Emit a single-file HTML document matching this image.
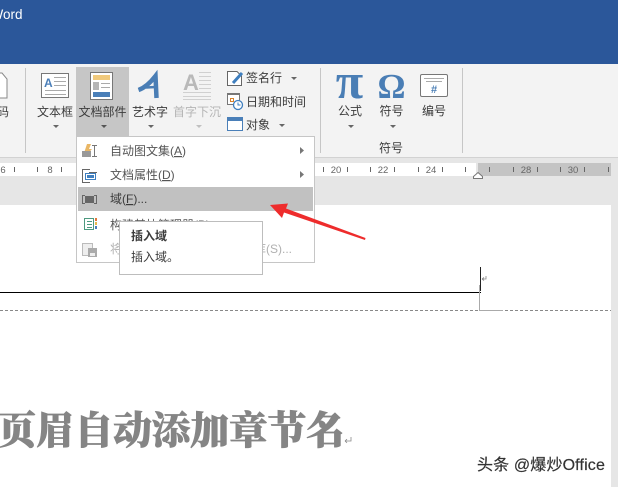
<!DOCTYPE html>
<html><head><meta charset="utf-8"><style>
html,body{margin:0;padding:0;background:#fff}
svg{display:block}
text{font-family:"Liberation Sans","Noto Sans CJK SC",sans-serif;font-size:12px;fill:#3c3c3c}
.c{text-anchor:middle}
.r{font-size:9.5px;fill:#666;text-anchor:middle}
</style></head><body>
<svg width="618" height="487" viewBox="0 0 618 487" xmlns="http://www.w3.org/2000/svg" style="overflow:hidden">
<rect width="618" height="487" fill="#e6e6e6"/>
<rect width="618" height="64" fill="#2b579a"/>
<text x="-9.500" y="19" style="font-size:13.500px;fill:#fff">Word</text>
<rect y="64" width="618" height="93" fill="#f3f3f3"/>
<rect y="157" width="618" height="1" fill="#d2d2d2"/>
<!-- separators -->
<rect x="25" y="68" width="1" height="85" fill="#c6c6c6"/>
<rect x="320" y="68" width="1" height="85" fill="#c6c6c6"/>
<rect x="462" y="68" width="1" height="85" fill="#c6c6c6"/>
<rect x="76" y="67" width="53" height="70" fill="#c6c6c6"/>
<!-- left remnant -->
<path d="M-2 73H2L7 79V98H-2Z" fill="#fff" stroke="#888"/>
<text x="-3" y="116">码</text>
<!-- text box -->
<rect x="41.500" y="73.500" width="27" height="24" fill="#fff" stroke="#777"/>
<text x="44" y="87" style="font-size:12px;font-weight:bold;fill:#4a7eb8">A</text>
<path d="M54 77.500H66M54 81.500H66M54 85.500H66M45 90.500H66M45 94.500H66" stroke="#aaa"/>
<text class="c" x="55" y="116">文本框</text>
<path d="M53 125h6l-3 3z" fill="#666"/>
<!-- doc parts -->
<rect x="90.500" y="72.500" width="22" height="27" fill="#fff" stroke="#777"/>
<rect x="93" y="75" width="17" height="5" fill="#f0c97c"/>
<rect x="93" y="82" width="6" height="8" fill="#b5b5b5"/>
<path d="M101 83.500H110M101 87.500H110" stroke="#aaa"/>
<rect x="93" y="92" width="17" height="5" fill="#4a7fb8"/>
<text class="c" x="102.500" y="116">文档部件</text>
<path d="M101 125h6l-3 3z" fill="#555"/>
<!-- wordart -->
<path d="M138.500 90Q147 87 155.500 76L156.500 98" fill="none" stroke="#4a7eb5" stroke-width="4.500"/>
<path d="M146 87.500L156 87" stroke="#4a7eb5" stroke-width="2.500"/>
<text class="c" x="150" y="116">艺术字</text>
<path d="M148 125h6l-3 3z" fill="#666"/>
<!-- drop cap -->
<text x="183" y="90" style="font-size:22px;font-weight:bold;fill:#b9b9b9">A</text>
<path d="M199 72.500H211M199 76.500H211M199 80.500H211M199 84.500H211M199 88.500H211M183 92.500H211M183 96.500H211M183 99.500H211" stroke="#d0d0d0"/>
<text class="c" x="197" y="116" style="fill:#b5b5b5">首字下沉</text>
<path d="M196 125h6l-3 3z" fill="#c0c0c0"/>
<!-- signature -->
<path d="M227.500 71.500H237L241.500 76V85.500H227.500Z" fill="#fff" stroke="#666"/>
<path d="M233 83L242 73" stroke="#3f7fbf" stroke-width="3"/>
<text x="246" y="82">签名行</text>
<path d="M291 77h6l-3 3z" fill="#666"/>
<!-- date -->
<rect x="227.500" y="93.500" width="12" height="11" fill="#fff" stroke="#777"/>
<rect x="227" y="93" width="13" height="2" fill="#777"/>
<rect x="230.500" y="98.500" width="3" height="3" fill="#fff" stroke="#d9822b"/>
<circle cx="238" cy="105" r="4.500" fill="#fff" stroke="#3f7fbf" stroke-width="1.300"/>
<path d="M238 102.500V105H240.500" fill="none" stroke="#3f7fbf"/>
<text x="246" y="106">日期和时间</text>
<!-- object -->
<rect x="227.500" y="117.500" width="15" height="13" fill="#fff" stroke="#4a7fb8"/>
<rect x="227" y="117" width="16" height="4" fill="#4a7fb8"/>
<text x="246" y="129">对象</text>
<path d="M279 124h6l-3 3z" fill="#666"/>
<!-- symbols -->
<text class="c" x="349.500" y="98" style="font-family:'Liberation Serif',serif;font-size:50px;font-weight:bold;fill:#4a7eb5">π</text>
<text class="c" x="391.500" y="98" style="font-family:'Liberation Serif',serif;font-size:35px;font-weight:bold;fill:#4a7eb5">Ω</text>
<rect x="420.500" y="74.500" width="27" height="22" rx="1.500" fill="#fff" stroke="#777"/>
<path d="M424 78.500H444M426 81.500H442" stroke="#aaa"/>
<text class="c" x="434" y="93" style="font-size:11px;font-weight:bold;fill:#4a7eb5">#</text>
<text class="c" x="350" y="115">公式</text>
<text class="c" x="391.500" y="115">符号</text>
<text class="c" x="434" y="115">编号</text>
<path d="M348 125h6l-3 3zM390 125h6l-3 3z" fill="#666"/>
<text class="c" x="391" y="152">符号</text>
<!-- ruler -->
<rect x="0" y="163" width="476" height="13" fill="#fff"/>
<rect x="478" y="163" width="133" height="13" fill="#c4c4c4"/>
<path d="M14.500 167v5M37.500 167v5M61.500 167v5M323.500 167v5M347.500 167v5M370.500 167v5M394.500 167v5M418.500 167v5M442.500 167v5M465.500 167v5M489.500 167v5M513.500 167v5M537.500 167v5M560.500 167v5M584.500 167v5M608.500 167v5" stroke="#666"/>
<text class="r" x="3" y="173">6</text><text class="r" x="50" y="173">8</text>
<text class="r" x="336" y="173">20</text><text class="r" x="383" y="173">22</text><text class="r" x="431" y="173">24</text>
<text class="r" x="526" y="173">28</text><text class="r" x="573" y="173">30</text>
<path d="M473.500 178.500V176.500L478 172.500L482.500 176.500V178.500Z" fill="#fff" stroke="#777"/>
<!-- page -->
<rect x="0" y="205" width="611" height="282" fill="#fff"/>
<path d="M0 292.500H481" stroke="#000"/>
<path d="M0 310.500H611" stroke="#888" stroke-dasharray="3 2"/>
<path d="M480.500 267V291" stroke="#222"/>
<path d="M479.500 285V310.500H503" fill="none" stroke="#aaa"/>
<path d="M486 276v3h-4M482 279l2-1.500M482 279l2 1.500" fill="none" stroke="#888" stroke-width=".8"/>
<text x="-2.500" y="444" style="font-family:'Liberation Serif','Noto Serif CJK SC',serif;font-size:38.600px;font-weight:900;fill:#858585;stroke:#858585;stroke-width:.7">页眉自动添加章节名</text>
<path d="M351 437v4h-6M345 441l2-1.800M345 441l2 1.800" fill="none" stroke="#888" stroke-width=".8"/>
<!-- menu -->
<rect x="76.500" y="136.500" width="238" height="126" fill="#fff" stroke="#c6c6c6"/>
<rect x="78" y="187" width="235" height="24" fill="#c1c1c1"/>
<path d="M83 156L87 144H91L89 149H92L85 157Z" fill="#eab765"/>
<rect x="82" y="151" width="9" height="6" fill="#999"/>
<path d="M92 145.500H97M94.500 145.500V156.500M92 156.500H97" fill="none" stroke="#777"/>
<path d="M90 169.500H82.500V182.500H90M89 172.500H97" fill="none" stroke="#666"/>
<rect x="85.500" y="173.500" width="10" height="6" fill="#fff" stroke="#3f7fbf"/>
<rect x="87" y="175" width="7" height="3" fill="#3f7fbf"/>
<path d="M85 195.500H82.500V203.500H85M94 195.500H96.500V203.500H94" fill="none" stroke="#666"/>
<rect x="85" y="196" width="9" height="7" fill="#666"/>
<rect x="84.500" y="218.500" width="9" height="11" fill="#fff" stroke="#4d9a80"/>
<path d="M87 221.500H92M87 224.500H92M87 227.500H92" stroke="#4d9a80"/>
<path d="M95 218h2v3h-2z" fill="#e0763a"/><path d="M95 222h2v3h-2z" fill="#e9b84a"/><path d="M95 226h2v3h-2z" fill="#4a7fb8"/>
<rect x="82.500" y="243.500" width="10" height="12" fill="#eee" stroke="#bbb"/>
<rect x="88" y="248" width="9" height="9" fill="#aaa"/>
<rect x="90" y="253" width="5" height="3" fill="#eee"/>
<text x="110" y="155" style="fill:#555">自动图文集(<tspan text-decoration="underline">A</tspan>)</text>
<text x="110" y="179" style="fill:#555">文档属性(<tspan text-decoration="underline">D</tspan>)</text>
<text x="110" y="203">域(<tspan text-decoration="underline">F</tspan>)...</text>
<text x="110" y="229" style="fill:#555">构建基块管理器(B)...</text>
<text x="110" y="253" style="fill:#b0b0b0">将所选内容保存到文档部件库(S)...</text>
<path d="M300 147v7l4-3.500zM300 171v7l4-3.500z" fill="#777"/>
<!-- tooltip -->
<rect x="119.500" y="221.500" width="143" height="53" fill="#fff" stroke="#bdbdbd"/>
<text x="131" y="240" style="font-weight:bold">插入域</text>
<text x="131" y="261">插入域。</text>
<!-- arrow -->
<path d="M270 205L288 203.500L286 208.500L365.500 238L365 240L284 212.500L282 218Z" fill="#ee2c2c"/>
<!-- watermark -->
<text x="477" y="470" style="font-size:16px;fill:#333;stroke:#333;stroke-width:.2;letter-spacing:.15px">头条 @爆炒Office</text>
</svg>
</body></html>
